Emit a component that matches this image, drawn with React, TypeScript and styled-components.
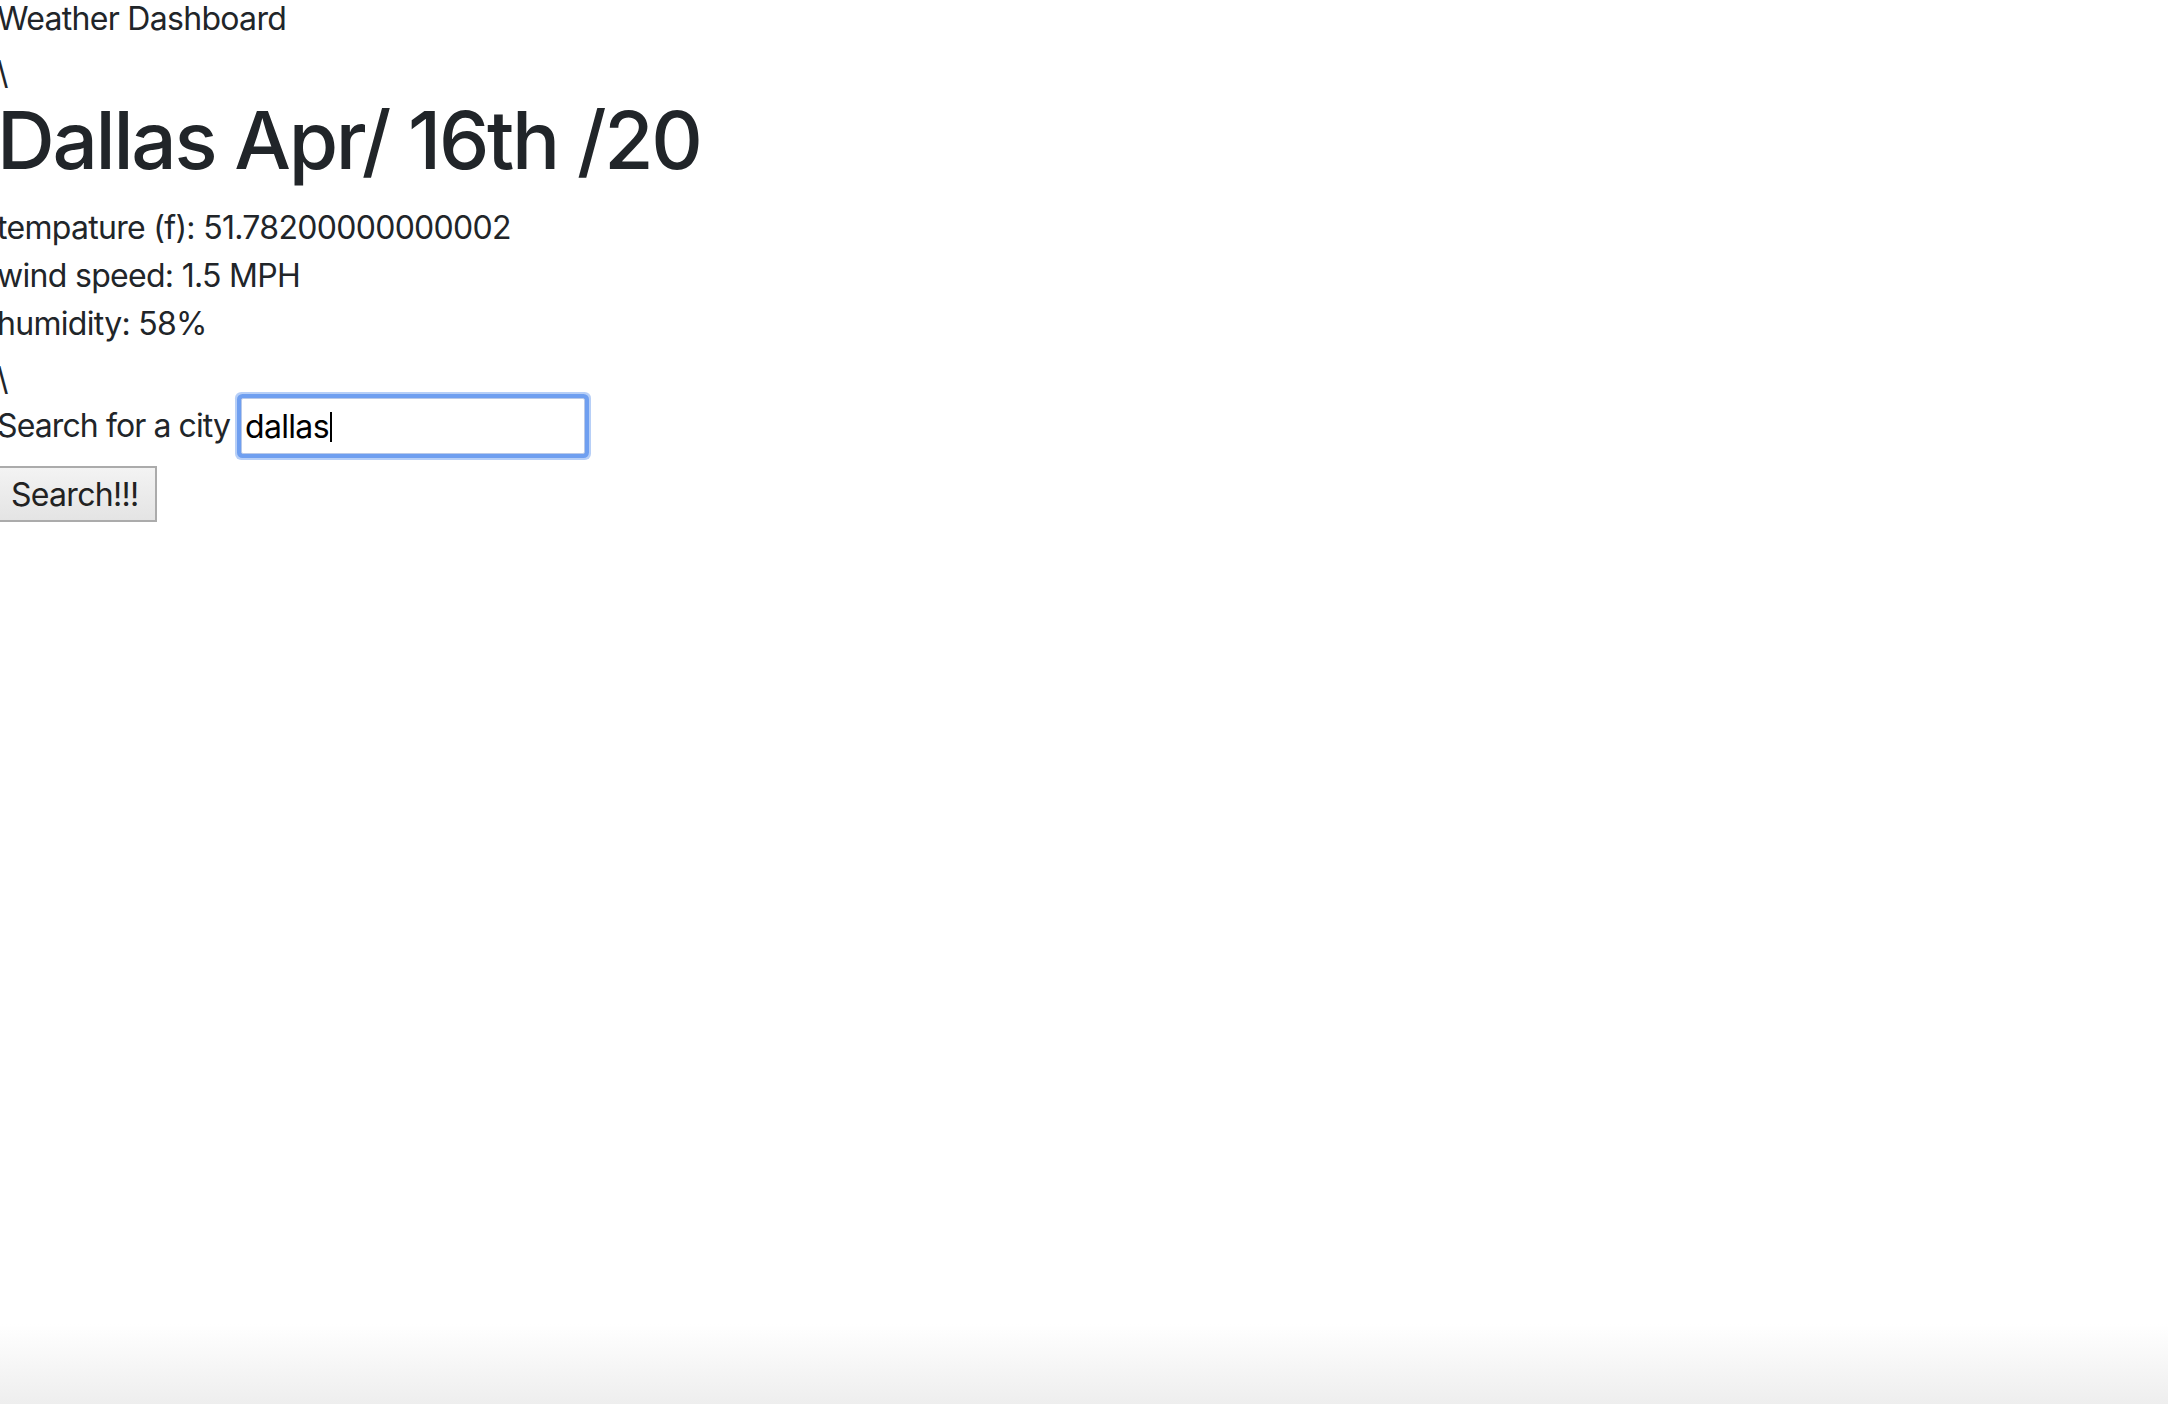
import React from "react";
import styled, { createGlobalStyle } from "styled-components";

const Global = createGlobalStyle`
  html {
    height: 100%;
    background: linear-gradient(to bottom, #ffffff 0, #ffffff calc(100% - 80px), #eeeeee 100%);
  }
  body {
    margin: 0;
    min-height: 100%;
    font-family: Inter, "Noto Sans", Arial, sans-serif;
    font-size: 32px;
    letter-spacing: -0.7px;
    line-height: 1.5;
    color: #212529;
    overflow: hidden;
  }
`;

const Page = styled.main`
  display: flex;
  flex-direction: column;
  align-items: flex-start;
  margin: -5px 0 0 -3px;
`;

const Title = styled.header`
  line-height: 48px;
`;

const Glyph = styled.div<{ $gap: number }>`
  line-height: 39px;
  margin-top: ${(p) => p.$gap}px;
`;

const Heading = styled.h1`
  margin: 0 0 16px 0;
  font-size: 80px;
  font-weight: 500;
  line-height: 96px;
  letter-spacing: -2.3px;
`;

const Stat = styled.div`
  line-height: 48px;
`;

const SearchRow = styled.div`
  display: flex;
  align-items: center;
  gap: 11px;
`;

const Label = styled.label`
  line-height: 48px;
  letter-spacing: -0.9px;
`;

const Field = styled.div`
  position: relative;
  display: flex;
`;

const Input = styled.input`
  box-sizing: border-box;
  width: 344px;
  height: 56px;
  padding: 0 3px;
  border: 1px solid #b9c9e8;
  border-radius: 2px;
  font-family: inherit;
  font-size: 32px;
  letter-spacing: -0.7px;
  color: #000;
  caret-color: transparent;
  background: #fff;
  outline: none;
  box-shadow: 0 0 0 4px #6f9ff0, 0 0 0 6px #b7cff7;
`;

const Caret = styled.span<{ $left: number }>`
  position: absolute;
  left: ${(p) => p.$left}px;
  top: 14px;
  width: 2px;
  height: 30px;
  background: #000;
  pointer-events: none;
`;

const Button = styled.button`
  margin-top: 12px;
  box-sizing: border-box;
  height: 56px;
  padding: 0 16px 0 12px;
  border: 2px solid #ababab;
  border-radius: 0;
  background: linear-gradient(to bottom, #f3f3f3, #e4e4e4);
  font-family: inherit;
  font-size: 32px;
  letter-spacing: -0.7px;
  color: #222;
  cursor: pointer;
`;

export default function App() {
  return (
    <>
      <Global />
      <Page>
        <Title>Weather Dashboard</Title>
        <Glyph $gap={10}>\</Glyph>
        <Heading>Dallas Apr/ 16th /20</Heading>
        <Stat>tempature (f): 51.78200000000002</Stat>
        <Stat>wind speed: 1.5 MPH</Stat>
        <Stat>humidity: 58%</Stat>
        <Glyph $gap={11}>\</Glyph>
        <SearchRow>
          <Label htmlFor="city">Search for a city</Label>
          <Field>
            <Input id="city" defaultValue="dallas" />
            <Caret $left={89} />
          </Field>
        </SearchRow>
        <Button>Search!!!</Button>
      </Page>
    </>
  );
}
